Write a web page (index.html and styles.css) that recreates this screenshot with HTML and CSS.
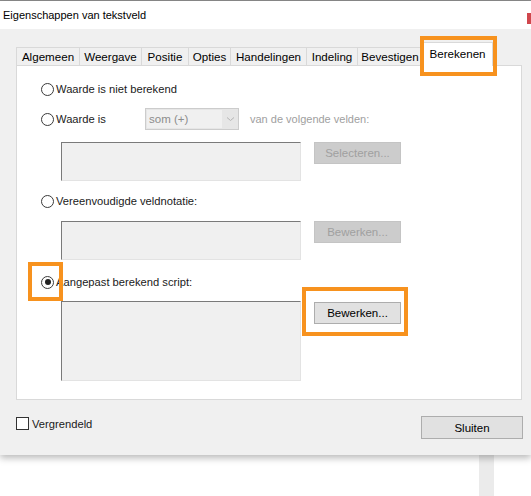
FILE: index.html
```html
<!DOCTYPE html>
<html>
<head>
<meta charset="utf-8">
<link rel="stylesheet" href="styles.css">
</head>
<body>
<div class="topline"></div>
<div class="dialog">
  <div class="titlebar">
    <span class="title">Eigenschappen van tekstveld</span>
    <span class="close-edge"></span>
  </div>
  <div class="dlg-body">
    <div class="tabs">
      <div class="tab">Algemeen</div>
      <div class="tab">Weergave</div>
      <div class="tab">Positie</div>
      <div class="tab">Opties</div>
      <div class="tab">Handelingen</div>
      <div class="tab">Indeling</div>
      <div class="tab">Bevestigen</div>
      <div class="tab active">Berekenen</div>
    </div>
    <div class="panel">
      <div class="row r1">
        <span class="radio"></span><span class="lbl">Waarde is niet berekend</span>
      </div>
      <div class="row r2">
        <span class="radio"></span><span class="lbl lbl-w">Waarde is</span>
        <span class="combo"><span class="combo-text">som (+)</span><span class="combo-arrow"><svg width="9" height="6" viewBox="0 0 9 6"><path d="M1 1.5 L4.5 4.5 L8 1.5" fill="none" stroke="#b5b5b5" stroke-width="1"/></svg></span></span>
        <span class="dim">van de volgende velden:</span>
      </div>
      <div class="field-row f1">
        <div class="field"></div>
        <div class="btn disabled">Selecteren...</div>
      </div>
      <div class="row r3">
        <span class="radio"></span><span class="lbl">Vereenvoudigde veldnotatie:</span>
      </div>
      <div class="field-row f2">
        <div class="field"></div>
        <div class="btn disabled">Bewerken...</div>
      </div>
      <div class="row r4">
        <span class="radio checked"></span><span class="lbl">Aangepast berekend script:</span>
      </div>
      <div class="field-row f3">
        <div class="field tall"></div>
        <div class="btn">Bewerken...</div>
      </div>
    </div>
    <div class="footer">
      <div class="check-row"><span class="checkbox"></span><span class="lbl">Vergrendeld</span></div>
      <div class="btn close-btn">Sluiten</div>
    </div>
  </div>
  <div class="hl hl-tab"></div>
  <div class="hl hl-radio"></div>
  <div class="hl hl-btn"></div>
</div>
<div class="below">
  <div class="bar"></div>
</div>
</body>
</html>
```

FILE: styles.css
```css
html, body {
  margin: 0;
  padding: 0;
  background: #ffffff;
  font-family: "Liberation Sans", Arial, sans-serif;
  font-size: 11.2px;
  color: #1a1a1a;
  width: 531px;
  height: 496px;
  overflow: hidden;
}
.topline {
  height: 1px;
  background: #8c8c8c;
}
.dialog {
  position: relative;
  width: 531px;
  background: #f0f0f0;
  box-shadow: 0 3px 7px rgba(0, 0, 0, 0.28);
  z-index: 2;
}
.titlebar {
  height: 28px;
  background: #ffffff;
  display: flex;
  align-items: center;
  padding-left: 3px;
  position: relative;
}
.title {
  color: #000;
  font-size: 11px;
  margin-top: -1px;
}
.close-edge {
  position: absolute;
  right: 0;
  top: 12px;
  width: 4px;
  height: 11px;
  background: #d0474d;
}
.dlg-body {
  padding: 13px 0 0 16px;
  height: 426px;
  box-sizing: border-box;
}
.tabs {
  display: flex;
  align-items: flex-end;
  height: 23px;
  position: relative;
  z-index: 1;
}
.tab {
  height: 18px;
  line-height: 18px;
  box-sizing: border-box;
  text-align: center;
  font-size: 11.6px;
  border: 1px solid #d9d9d9;
  border-bottom: none;
  margin-right: -1px;
  background: #f0f0f0;
  color: #000;
}
.tab:nth-child(1) { width: 64px; }
.tab:nth-child(2) { width: 63px; }
.tab:nth-child(3) { width: 48px; }
.tab:nth-child(4) { width: 43px; }
.tab:nth-child(5) { width: 77px; }
.tab:nth-child(6) { width: 52px; }
.tab:nth-child(7) { width: 66px; }
.tab.active {
  width: 71px;
  height: 24px;
  line-height: 22px;
  margin-bottom: -1px;
  background: #ffffff;
  position: relative;
}
.panel {
  background: #ffffff;
  border: 1px solid #d9d9d9;
  padding: 13px 0 0 24px;
  box-sizing: border-box;
  width: 506px;
  height: 335px;
}
.row {
  display: flex;
  align-items: center;
  height: 20px;
}
.r2 { margin-top: 9px; height: 22px; }
.r3 { margin-top: 10px; }
.r4 { margin-top: 12px; }
.radio {
  width: 11px;
  height: 11px;
  border: 1px solid #3a3a3a;
  border-radius: 50%;
  background: #fff;
  box-sizing: content-box;
  position: relative;
  flex: none;
}
.radio.checked::after {
  content: "";
  position: absolute;
  left: 2.5px;
  top: 2.5px;
  width: 6px;
  height: 6px;
  border-radius: 50%;
  background: #222;
}
.lbl {
  margin-left: 2px;
  color: #1a1a1a;
}
.lbl-w {
  width: 89px;
}
.combo {
  display: flex;
  width: 94px;
  height: 22px;
  background: #e6e6e6;
  border: 1px solid #cccccc;
  box-sizing: border-box;
}
.combo-text {
  flex: 1;
  background: #f0f0f0;
  margin: 1px 0 1px 1px;
  color: #8c8c8c;
  line-height: 18px;
  padding-left: 2px;
  font-size: 11.5px;
}
.combo-arrow {
  width: 16px;
  display: flex;
  align-items: center;
  justify-content: center;
}
.dim {
  color: #a0a0a0;
  font-size: 11px;
  margin-left: 11px;
}
.field-row {
  display: flex;
  align-items: flex-start;
  margin-left: 20px;
  gap: 13px;
}
.f1 { margin-top: 12px; }
.f2 { margin-top: 10px; }
.f3 { margin-top: 9px; }
.field {
  width: 240px;
  height: 39px;
  background: #f0f0f0;
  border: 1px solid;
  border-color: #7a7a7a #e3e3e3 #e3e3e3 #7a7a7a;
  box-sizing: border-box;
}
.field.tall {
  height: 80px;
}
.btn {
  width: 87px;
  height: 22px;
  box-sizing: border-box;
  background: #e1e1e1;
  border: 1px solid #adadad;
  display: flex;
  align-items: center;
  justify-content: center;
  color: #000;
  font-size: 11.5px;
}
.f3 .btn { margin-top: 1px; }
.btn.disabled {
  background: #cccccc;
  border-color: #c4c4c4;
  color: #a0a0a0;
}
.footer {
  display: flex;
  justify-content: space-between;
  align-items: flex-start;
  padding: 16px 8px 0 0;
}
.check-row {
  display: flex;
  align-items: center;
  margin-top: 1px;
  height: 13px;
}
.checkbox {
  width: 11px;
  height: 11px;
  border: 1px solid #333;
  background: #fff;
}
.check-row .lbl { margin-left: 3px; }
.close-btn {
  width: 102px;
  height: 23px;
}
.hl {
  position: absolute;
  border: 4px solid #f7921e;
  box-sizing: border-box;
  z-index: 5;
}
.hl-tab {
  left: 420px;
  top: 35px;
  width: 77px;
  height: 40px;
}
.hl-radio {
  left: 28px;
  top: 261px;
  width: 35px;
  height: 39px;
}
.hl-btn {
  left: 302px;
  top: 286px;
  width: 106px;
  height: 49px;
}
.below {
  height: 41px;
  position: relative;
  display: flex;
  padding-left: 479px;
}
.bar {
  width: 15px;
  height: 41px;
  background: #ebebeb;
}
```
